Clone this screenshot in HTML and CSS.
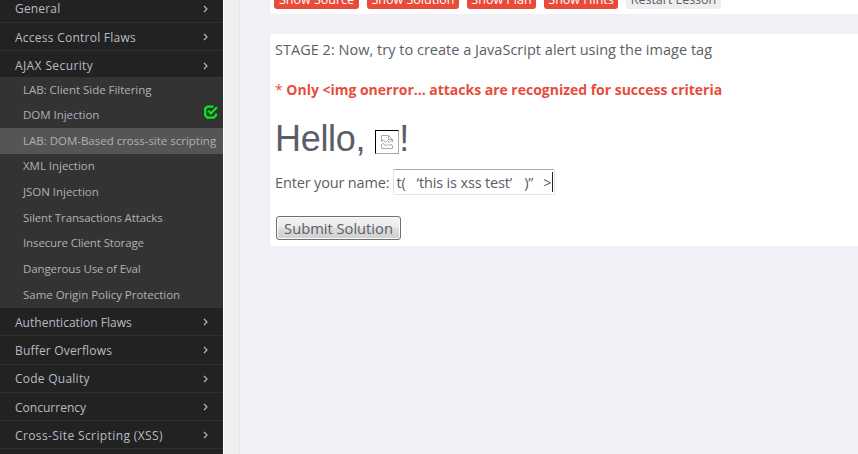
FILE: index.html
```html
<!DOCTYPE html>
<html lang="en">
<head>
<meta charset="utf-8">
<title>WebGoat</title>
<link rel="stylesheet" href="styles.css">
</head>
<body>
<div class="app">
<aside class="sidebar">
<nav>
<a class="cat first"><span>General</span><svg class="chev" viewBox="0 0 5 8"><path d="M1 1l3 3-3 3"/></svg></a>
<a class="cat wide"><span>Access Control Flaws</span><svg class="chev" viewBox="0 0 5 8"><path d="M1 1l3 3-3 3"/></svg></a>
<a class="cat open wider"><span>AJAX Security</span><svg class="chev" viewBox="0 0 5 8"><path d="M1 1l3 3-3 3"/></svg></a>
<div class="sub">
<a><span>LAB: Client Side Filtering</span></a>
<a><span>DOM Injection</span><svg class="check" viewBox="0 0 14 14"><path d="M9.5 1.6H3.4L1.2 3.6v6.7L3.4 12.6h6.4l2.2-2.3V8.5"/><path d="M4.3 5.8l2.6 2.6 6-6.2"/></svg></a>
<a class="active"><span>LAB: DOM-Based cross-site scripting</span></a>
<a><span>XML Injection</span></a>
<a><span>JSON Injection</span></a>
<a class="tight"><span>Silent Transactions Attacks</span></a>
<a class="tight"><span>Insecure Client Storage</span></a>
<a class="tight"><span>Dangerous Use of Eval</span></a>
<a><span>Same Origin Policy Protection</span></a>
</div>
<a class="cat snug"><span>Authentication Flaws</span><svg class="chev" viewBox="0 0 5 8"><path d="M1 1l3 3-3 3"/></svg></a>
<a class="cat"><span>Buffer Overflows</span><svg class="chev" viewBox="0 0 5 8"><path d="M1 1l3 3-3 3"/></svg></a>
<a class="cat wide"><span>Code Quality</span><svg class="chev" viewBox="0 0 5 8"><path d="M1 1l3 3-3 3"/></svg></a>
<a class="cat snug"><span>Concurrency</span><svg class="chev" viewBox="0 0 5 8"><path d="M1 1l3 3-3 3"/></svg></a>
<a class="cat wider"><span>Cross-Site Scripting (XSS)</span><svg class="chev" viewBox="0 0 5 8"><path d="M1 1l3 3-3 3"/></svg></a>
</nav>
</aside>
<div class="gutter"></div>
<main>
<div class="toolbar">
<button class="btn source">Show Source</button><button class="btn solution">Show Solution</button><button class="btn plan">Show Plan</button><button class="btn hints">Show Hints</button><button class="btn restart">Restart Lesson</button>
</div>
<section class="lesson">
<p class="stage">STAGE 2: Now, try to create a JavaScript alert using the image tag</p>
<p class="notice"><span class="star">*</span> Only &lt;img onerror... attacks are recognized for success criteria</p>
<h1><span class="hello">Hello,</span><span class="broken"><svg viewBox="0 0 14 16"><path d="M1.5 8V1.5h7l4 4V8M8.5 1.5v4h4M1.5 7.5l2-1.5 2 2.5 2-2 2 2 1.5-2 1.5 1.5M1.5 14.5v-4l2-1 2 2.5 2-2 2 2 1.5-2 1.5 1.5v3z"/></svg></span><span>!</span></h1>
<div class="field"><label>Enter your name:</label><div class="input"><span class="t1">t(</span><span class="t2">‘this is xss test’</span><span class="t3">)”</span><span class="t4">&gt;</span><i class="caret"></i></div></div>
<button class="submit">Submit Solution</button>
</section>
</main>
</div>
</body>
</html>
```
FILE: styles.css
```css
* { box-sizing: border-box; }
body { margin: 0; height: 454px; overflow: hidden; background: #f0f1f6; font-family: "Open Sans", "Noto Sans", sans-serif; color: #5a5e66; }
.app { display: flex; height: 454px; }
.sidebar { width: 223px; flex: none; background: #222; overflow: hidden; }
.sidebar nav { margin-top: -5.4px; }
.cat { display: flex; justify-content: space-between; align-items: center; height: 28.3px; padding: 1px 15px 0; font-size: 12px; letter-spacing: 0.18px; color: #b8bcc2; border-bottom: 1px solid #303030; white-space: nowrap; }
.cat.wide { letter-spacing: 0.25px; }
.cat.wider { letter-spacing: 0.39px; }
.cat.snug { letter-spacing: 0.02px; }
.cat.open { height: 26px; border-bottom: 0; padding-top: 3px; }
.chev { width: 5px; height: 8px; fill: none; stroke: #b4b4b4; stroke-width: 1.2; }
.sub { background: #333; }
.sub a { display: flex; justify-content: space-between; align-items: center; height: 25.65px; padding: 0 5px 2px 23px; font-size: 11.5px; letter-spacing: -0.03px; color: #adb1b6; white-space: nowrap; }
.sub a.active { background: #555; letter-spacing: -0.01px; }
.sub a.tight { letter-spacing: -0.12px; }
.check { width: 14px; height: 14px; margin-top: -5px; fill: none; stroke: #00f215; stroke-width: 2.2; }
.gutter { width: 17px; flex: none; background: #efefef; border-left: 1px solid #fff; border-right: 1px solid #e6e7ec; }
main { flex: 1; padding-left: 30px; }
.toolbar { display: flex; gap: 8px; height: 14px; padding-left: 4px; background: #fff; border-radius: 0 0 0 3px; align-items: flex-end; padding-bottom: 5px; }
.btn { flex: none; height: 20px; padding: 0; border: 0; border-radius: 3px; background: #e94b3b; color: #fff; font: 12.5px/22px "Open Sans", sans-serif; white-space: nowrap; }
.source { width: 85px; }
.solution { width: 92px; }
.plan { width: 69px; }
.hints { width: 74px; }
.restart { width: 95px; background: #eee; color: #5a5e66; }
.lesson { margin-top: 20px; height: 212px; padding: 0 5px; background: #fff; border-radius: 3px 0 0 3px; }
.lesson p { margin: 0; white-space: nowrap; }
.stage { padding-top: 5px; font-size: 14.5px; line-height: 21px; letter-spacing: 0.02px; }
.notice { padding-top: 20px; font-size: 14px; line-height: 20px; font-weight: 700; letter-spacing: -0.015px; color: #e94b3b; }
.star { font-weight: 400; }
h1 { display: flex; margin: 18px 0 0; height: 42px; font: 36px/42px "Liberation Sans", sans-serif; }
.hello { letter-spacing: -0.3px; }
.broken { display: flex; width: 24px; height: 24px; margin: 12px 0 0 10px; align-items: center; justify-content: center; border: 1px solid #aaa; border-top-color: #000; border-left-color: #000; }
.broken svg { width: 14px; height: 16px; fill: none; stroke: #aaa; stroke-width: 1; }
.field { display: flex; align-items: center; height: 26px; margin-top: 9px; font-size: 14.5px; letter-spacing: -0.15px; white-space: nowrap; }
.input { display: flex; align-items: center; width: 162px; height: 26px; margin-left: 4px; padding-left: 2px; border: 1px solid #dfe2ec; border-top-color: #aaa; border-radius: 2px; }
.t2 { margin-left: 11px; }
.t3 { margin-left: 12px; }
.t4 { margin-left: 10px; }
.caret { width: 1px; height: 20px; margin-left: 1px; background: #222; }
.submit { display: block; width: 125px; height: 24px; margin: 21px 0 0 1px; padding: 0; border: 1px solid #707070; border-radius: 3px; background: linear-gradient(#f2f2f2, #ebebeb 49%, #ddd 50%, #cfcfcf); box-shadow: inset 0 0 0 1px #fafafa; font: 14.7px/22px "Open Sans", sans-serif; color: #5a5e66; }
```
